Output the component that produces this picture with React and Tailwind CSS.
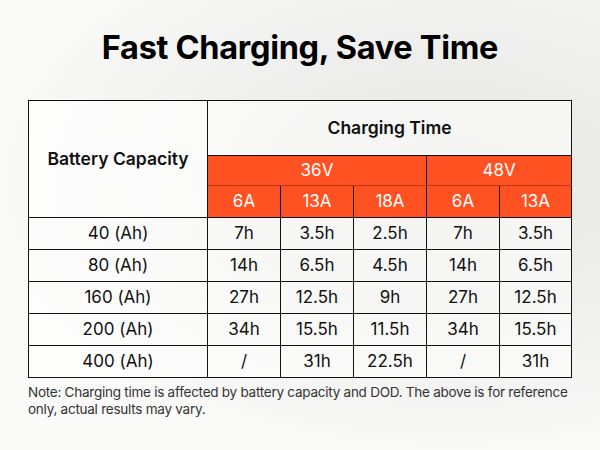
const rows = [
  ['40 (Ah)', '7h', '3.5h', '2.5h', '7h', '3.5h'],
  ['80 (Ah)', '14h', '6.5h', '4.5h', '14h', '6.5h'],
  ['160 (Ah)', '27h', '12.5h', '9h', '27h', '12.5h'],
  ['200 (Ah)', '34h', '15.5h', '11.5h', '34h', '15.5h'],
  ['400 (Ah)', '/', '31h', '22.5h', '/', '31h'],
]

const currents = ['6A', '13A', '18A', '6A', '13A']

function App() {
  return (
    <div
      className="w-[600px] h-[450px] overflow-hidden bg-[radial-gradient(ellipse_at_75%_40%,#e4e4e1_0%,#f1f1ef_45%,#fafaf9_75%)] text-[#111]"
      style={{ fontFamily: 'Inter, "Liberation Sans", sans-serif' }}
    >
      <h1 className="pt-[30px] h-[100px] text-center text-[32.5px] leading-[36px] font-bold tracking-[-0.3px] text-black">
        Fast Charging, Save Time
      </h1>

      <table className="ml-[28px] w-[543px] border-collapse table-fixed text-center text-[17px]">
        <colgroup>
          <col className="w-[179px]" />
          <col className="w-[73px]" />
          <col className="w-[73px]" />
          <col className="w-[73px]" />
          <col className="w-[73px]" />
          <col className="w-[72px]" />
        </colgroup>
        <thead>
          <tr className="h-[55px]">
            <th rowSpan={3} className="border border-[#111] bg-white/70 text-[17.5px] font-semibold">
              Battery Capacity
            </th>
            <th colSpan={5} className="border border-[#111] bg-white/60 text-[17.5px] font-semibold">
              Charging Time
            </th>
          </tr>
          <tr className="h-[30px] bg-[#ff5122] text-white">
            <th colSpan={3} className="border-x border-[#111] border-b border-b-[#b33a18] font-normal">
              36V
            </th>
            <th colSpan={2} className="border-x border-[#111] border-b border-b-[#b33a18] font-normal">
              48V
            </th>
          </tr>
          <tr className="h-[32px] bg-[#ff5122] text-white">
            {currents.map((c, i) => (
              <th key={i} className="border border-[#111] font-normal">
                {c}
              </th>
            ))}
          </tr>
        </thead>
        <tbody>
          {rows.map((row) => (
            <tr key={row[0]} className="h-[32px]">
              {row.map((cell, i) => (
                <td key={i} className="border border-[#111] bg-white/55 leading-none">
                  {cell}
                </td>
              ))}
            </tr>
          ))}
        </tbody>
      </table>

      <p className="ml-[28px] mt-[6px] w-[548px] text-[13.5px] leading-[16.5px] tracking-[-0.25px] text-[#333]">
        Note: Charging time is affected by battery capacity and DOD. The above is for reference only, actual results may vary.
      </p>
    </div>
  )
}

export default App
